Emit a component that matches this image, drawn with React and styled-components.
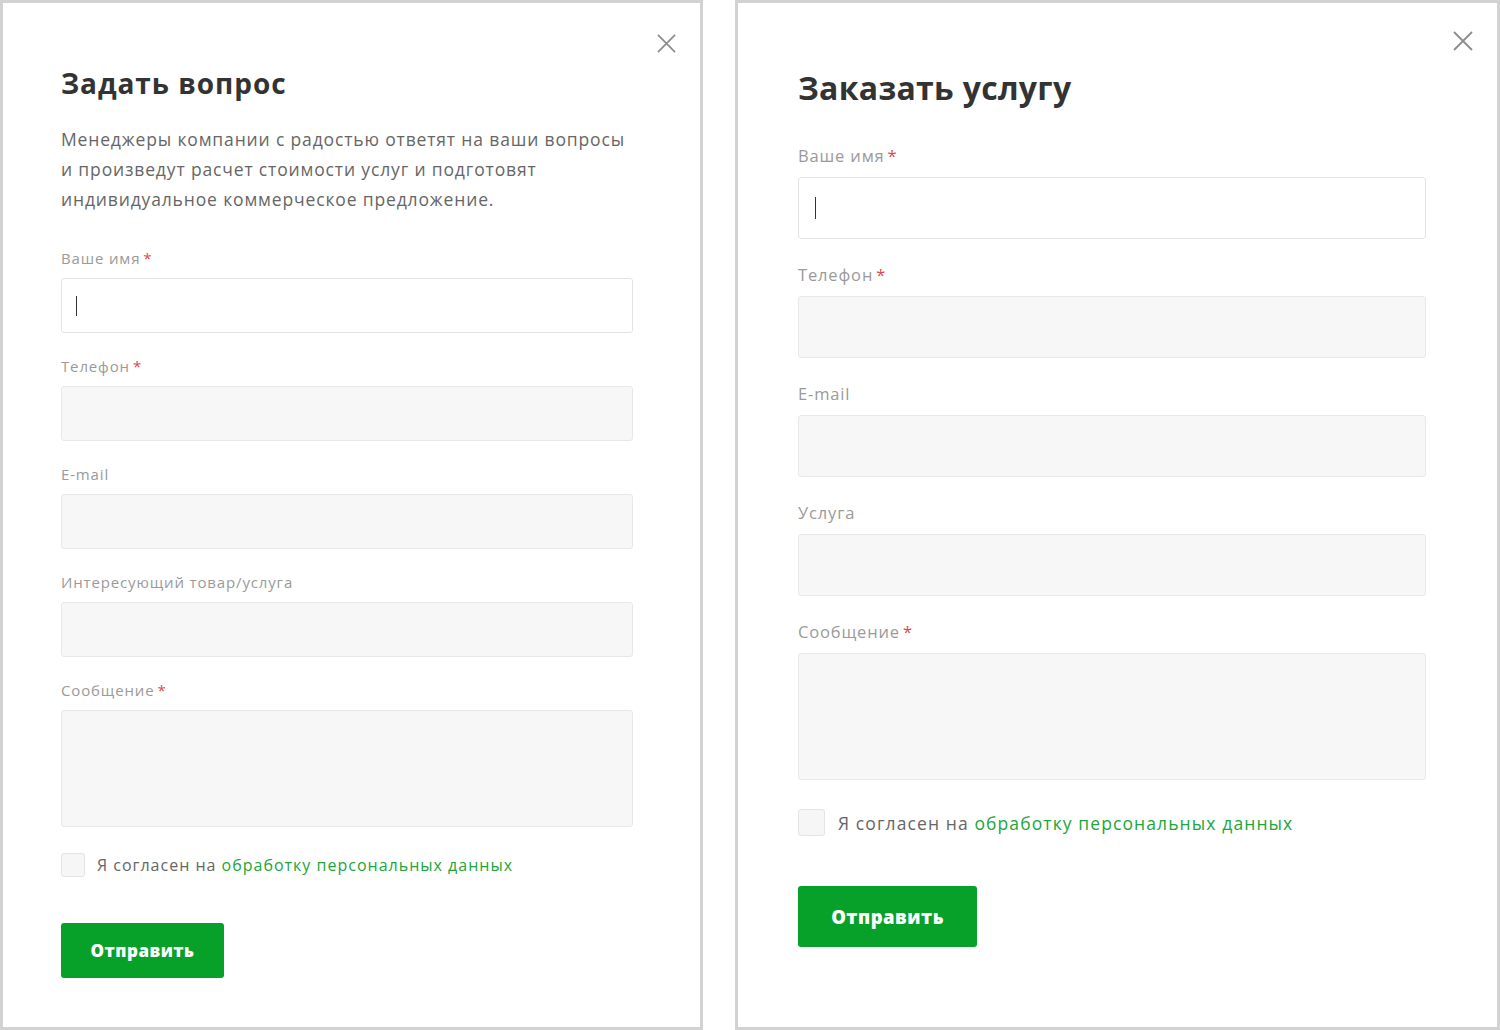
import React from "react";
import styled, { createGlobalStyle } from "styled-components";

const Global = createGlobalStyle`
  html, body { margin: 0; padding: 0; background: #fff; }
  body { font-family: "Open Sans", "Noto Sans", sans-serif; }
  * { box-sizing: border-box; }
`;

const Page = styled.div`
  display: flex;
  gap: 32px;
  width: 1500px;
  height: 1030px;
`;

const Panel = styled.section`
  position: relative;
  width: ${(p) => p.$w}px;
  height: 1030px;
  border: 3px solid #d2d2d2;
  background: #fff;
  padding: ${(p) => p.$top}px 0 0 ${(p) => p.$left}px;
`;

const Close = styled.button`
  position: absolute;
  top: ${(p) => p.$top}px;
  right: ${(p) => p.$right}px;
  width: ${(p) => p.$size}px;
  height: ${(p) => p.$size}px;
  padding: 0;
  border: 0;
  background: none;
  display: block;
  svg { display: block; width: 100%; height: 100%; }
`;

const Content = styled.div`
  width: ${(p) => p.$w}px;
  display: flex;
  flex-direction: column;
`;

const Title = styled.h2`
  margin: 0;
  font-family: "Open Sans", sans-serif;
  font-weight: 700;
  font-size: ${(p) => p.$fs}px;
  line-height: ${(p) => p.$lh}px;
  color: #333;
  letter-spacing: ${(p) => p.$ls}px;
`;

const Desc = styled.p`
  margin: 24px 0 0;
  font-size: 17.5px;
  line-height: 30px;
  color: #666;
  letter-spacing: 0.85px;
  white-space: nowrap;
`;

const Fields = styled.div`
  display: flex;
  flex-direction: column;
  gap: ${(p) => p.$gap}px;
  margin-top: ${(p) => p.$mt}px;
`;

const Field = styled.div`
  display: flex;
  flex-direction: column;
  gap: ${(p) => p.$gap}px;
`;

const Label = styled.div`
  font-size: ${(p) => p.$fs}px;
  line-height: ${(p) => p.$lh}px;
  color: #9a9a9a;
  letter-spacing: 0.85px;
`;

const Star = styled.span`
  color: #e0474c;
  margin-left: 3px;
`;

const Input = styled.div`
  height: ${(p) => p.$h}px;
  border: 1px solid ${(p) => (p.$active ? "#e3e3e3" : "#e8e8e8")};
  background: ${(p) => (p.$active ? "#fff" : "#f7f7f7")};
  border-radius: 3px;
  display: flex;
  align-items: center;
  padding-left: ${(p) => p.$pl}px;
`;

const Caret = styled.span`
  width: 1px;
  height: ${(p) => p.$h}px;
  background: #333;
`;

const Agree = styled.label`
  display: flex;
  align-items: center;
  gap: ${(p) => p.$gap}px;
  margin-top: ${(p) => p.$mt}px;
  font-size: ${(p) => p.$fs}px;
  color: #666;
  letter-spacing: ${(p) => p.$ls}px;
`;

const Box = styled.span`
  width: ${(p) => p.$size}px;
  height: ${(p) => p.$size}px;
  border: 1px solid #e4e4e4;
  background: #f6f6f6;
  border-radius: 3px;
  flex: none;
`;

const Link = styled.a`
  color: #21a63a;
  text-decoration: none;
`;

const Submit = styled.button`
  margin-top: ${(p) => p.$mt}px;
  width: ${(p) => p.$w}px;
  height: ${(p) => p.$h}px;
  border: 0;
  border-radius: 3px;
  background: #07a12a;
  color: #fff;
  font-family: "Open Sans", sans-serif;
  font-weight: 800;
  font-size: ${(p) => p.$fs}px;
  letter-spacing: 0.5px;
  padding: 0;
`;

const X = ({ c = "#8c8c8c" }) => (
  <svg viewBox="0 0 20 20" fill="none">
    <path d="M1 1L19 19M19 1L1 19" stroke={c} strokeWidth="1.8" />
  </svg>
);

const Req = () => <Star>*</Star>;

function Form({ cfg, title, desc, fields }) {
  return (
    <Panel $w={cfg.w} $top={cfg.top} $left={cfg.left}>
      <Close $top={cfg.xTop} $right={cfg.xRight} $size={cfg.xSize} aria-label="close">
        <X />
      </Close>
      <Content $w={cfg.cw}>
        <Title $fs={cfg.tfs} $lh={cfg.tlh} $ls={cfg.tls}>{title}</Title>
        {desc && (
          <Desc>
            {desc.map((l, i) => (
              <React.Fragment key={i}>
                {l}
                {i < desc.length - 1 && <br />}
              </React.Fragment>
            ))}
          </Desc>
        )}
        <Fields $gap={cfg.fgap} $mt={cfg.fmt}>
          {fields.map((f, i) => (
            <Field key={i} $gap={cfg.lgap}>
              <Label $fs={cfg.lfs} $lh={cfg.llh}>
                {f.label}
                {f.req && <Req />}
              </Label>
              <Input $h={f.area ? cfg.ah : cfg.ih} $active={i === 0} $pl={cfg.cpl}>
                {i === 0 && <Caret $h={cfg.ch} />}
              </Input>
            </Field>
          ))}
        </Fields>
        <Agree $gap={cfg.agap} $mt={cfg.amt} $fs={cfg.afs} $ls={cfg.als}>
          <Box $size={cfg.box} />
          <span>
            Я согласен на <Link href="#">обработку персональных данных</Link>
          </span>
        </Agree>
        <Submit $mt={cfg.bmt} $w={cfg.bw} $h={cfg.bh} $fs={cfg.bfs}>Отправить</Submit>
      </Content>
    </Panel>
  );
}

const left = {
  w: 703, top: 63, left: 58, cw: 572,
  xTop: 31, xRight: 24, xSize: 19,
  tfs: 28, tlh: 34, tls: 0.95,
  fmt: 34, fgap: 23, lgap: 10, lfs: 15, llh: 20,
  ih: 55, ah: 117, cpl: 14, ch: 20,
  amt: 26, agap: 12, afs: 16, als: 1.0, box: 24,
  bmt: 46, bw: 163, bh: 55, bfs: 17,
};

const right = {
  w: 765, top: 66, left: 60, cw: 628,
  xTop: 28, xRight: 24, xSize: 20,
  tfs: 32, tlh: 38, tls: 0.3,
  fmt: 38, fgap: 25, lgap: 10, lfs: 16.5, llh: 22,
  ih: 62, ah: 127, cpl: 16, ch: 22,
  amt: 29, agap: 13, afs: 17.5, als: 1.1, box: 27,
  bmt: 50, bw: 179, bh: 61, bfs: 18.5,
};

export default function App() {
  return (
    <>
      <Global />
      <Page>
        <Form
          cfg={left}
          title="Задать вопрос"
          desc={[
            "Менеджеры компании с радостью ответят на ваши вопросы",
            "и произведут расчет стоимости услуг и подготовят",
            "индивидуальное коммерческое предложение.",
          ]}
          fields={[
            { label: "Ваше имя", req: true },
            { label: "Телефон", req: true },
            { label: "E-mail" },
            { label: "Интересующий товар/услуга" },
            { label: "Сообщение", req: true, area: true },
          ]}
        />
        <Form
          cfg={right}
          title="Заказать услугу"
          fields={[
            { label: "Ваше имя", req: true },
            { label: "Телефон", req: true },
            { label: "E-mail" },
            { label: "Услуга" },
            { label: "Сообщение", req: true, area: true },
          ]}
        />
      </Page>
    </>
  );
}
